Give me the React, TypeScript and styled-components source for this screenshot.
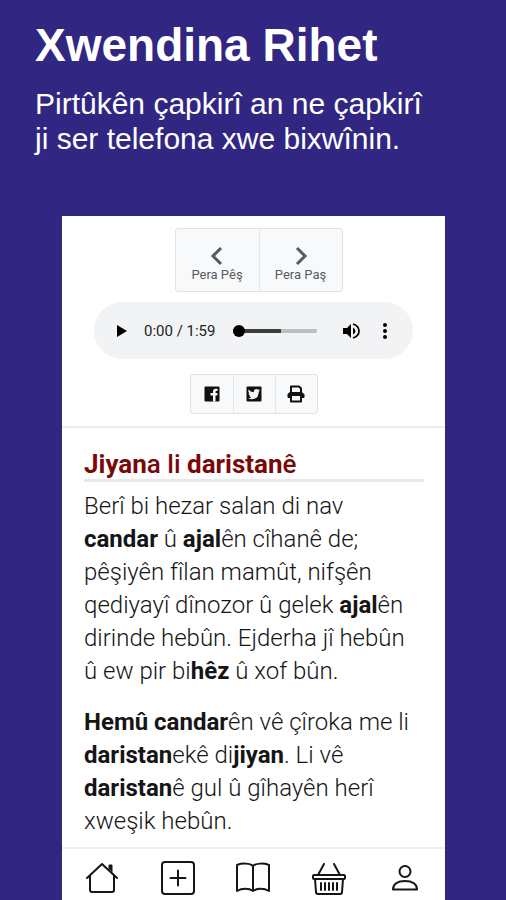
import React from "react";
import styled, { createGlobalStyle } from "styled-components";

const GlobalStyle = createGlobalStyle`
  *, *::before, *::after { box-sizing: border-box; }
  body { margin: 0; background: #312783; }
  h1, h2, p { margin: 0; }
  button { font: inherit; color: inherit; cursor: pointer; }
`;

const Page = styled.div`
  display: flex;
  flex-direction: column;
  min-height: 100vh;
  background: #312783;
`;

const Hero = styled.header`
  height: 216px;
  padding: 18px 35px 0;
  color: #fff;
  font-family: "Liberation Sans", Arial, sans-serif;
`;

const HeroTitle = styled.h1`
  font-size: 46px;
  line-height: 54px;
  font-weight: 700;
`;

const HeroText = styled.p`
  margin-top: 14px;
  font-size: 30px;
  line-height: 35px;
`;

const Screen = styled.main`
  flex: 1;
  display: flex;
  flex-direction: column;
  margin: 0 61px 0 62px;
  background: #fff;
  color: #151515;
  font-family: Roboto, sans-serif;
`;

const Controls = styled.section`
  display: flex;
  flex-direction: column;
  align-items: center;
  padding: 12px 32px;
  border-bottom: 2px solid #ededee;
`;

const ButtonGroup = styled.div`
  display: flex;
  border: 1px solid #dfe1e3;
  border-radius: 3px;
  background: #f8f9fa;

  > button + button {
    border-left: 1px solid #e4e6e8;
  }
`;

const PagerGroup = styled(ButtonGroup)`
  margin-left: 10px;
`;

const PageButton = styled.button`
  display: flex;
  flex-direction: column;
  align-items: center;
  gap: 1px;
  width: 83px;
  height: 62px;
  padding: 17px 0 0;
  border: 0;
  background: none;
  color: #555b61;
  font-size: 13px;
  line-height: 16px;
`;

const ShareButton = styled.button`
  display: grid;
  place-items: center;
  width: 42px;
  height: 38px;
  padding: 0;
  border: 0;
  background: none;
  color: #111;
`;

const Player = styled.div`
  display: flex;
  align-items: center;
  align-self: stretch;
  height: 57px;
  margin: 10px 0 15px;
  padding: 0 16px;
  border-radius: 29px;
  background: #f1f3f4;
`;

const PlayerButton = styled.button`
  display: grid;
  place-items: center;
  width: 24px;
  height: 32px;
  padding: 0;
  border: 0;
  background: none;
  color: #000;
`;

const Time = styled.span`
  margin: 0 18px 0 10px;
  color: #222;
  font-size: 15px;
  line-height: 24px;
  white-space: nowrap;
`;

const Seek = styled.input`
  flex: 1;
  min-width: 0;
  height: 12px;
  margin: 0 22px 0 0;
  appearance: none;
  background: linear-gradient(to right, #3b3c3c 57%, #bcbebf 57%) center / 100% 4px no-repeat;

  &::-webkit-slider-thumb {
    appearance: none;
    width: 12px;
    height: 12px;
    border-radius: 50%;
    background: #000;
  }
`;

const MoreButton = styled(PlayerButton)`
  margin-left: 10px;
`;

const Article = styled.article`
  flex: 1;
  padding: 21px 21px 8px 22px;
  font-size: 24px;
  line-height: 33px;
  font-weight: 300;

  b { font-weight: 700; }
`;

const Title = styled.h2`
  margin-bottom: 8px;
  border-bottom: 3px solid #e9e9e9;
  color: #7a0808;
  font-size: 26px;
  line-height: 30px;
  font-weight: 500;
`;

const Paragraph = styled.p`
  padding-right: 8px;

  & + & { margin-top: 18px; }
`;

const TabBar = styled.nav`
  display: grid;
  grid-template-columns: repeat(5, 1fr);
  height: 53px;
  padding: 0 2px;
  border-top: 2px solid #efeff0;
`;

const Tab = styled.a`
  display: grid;
  place-items: center;
  padding-top: 6px;
  color: #161616;
`;

const Icon = styled.svg`
  display: block;
  fill: none;
  stroke: currentColor;
  stroke-linejoin: round;
  stroke-linecap: round;
  stroke-width: 2;
`;

const tabs = [
  {
    label: "Mal",
    drawing: (
      <>
        <path d="M2 17 17 3 32 17" />
        <path d="M5 15V29Q5 31 7 31H27Q29 31 29 29V15" />
        <path d="M24 8V4H27V11" fill="currentColor" strokeWidth="1" />
      </>
    ),
  },
  {
    label: "Zêde bike",
    drawing: (
      <>
        <rect x="1" y="1" width="32" height="32" rx="3" />
        <path d="M17 9.500V24.500M9.500 17H24.500" />
      </>
    ),
  },
  {
    label: "Pirtûk",
    drawing: (
      <path d="M17 5C14 2 6 2 1 4V30C6 27 13 27 17 30C21 27 28 27 33 30V4C28 2 20 2 17 5V30" />
    ),
  },
  {
    label: "Selik",
    drawing: (
      <>
        <path d="M6 14 12 3M28 14 22 3" />
        <rect x="1" y="14" width="32" height="4" rx="1" />
        <path d="M3 18 4 31Q4 33 6 33H28Q30 33 30 31L31 18" />
        <path d="M9 22V29M13 22V29M17 22V29M21 22V29M25 22V29" />
      </>
    ),
  },
  {
    label: "Profîl",
    drawing: (
      <>
        <circle cx="17" cy="10.500" r="5.500" />
        <path d="M5 28.500C5 23 10 20 17 20S29 23 29 28.500Z" />
      </>
    ),
  },
];

export default function App() {
  return (
    <Page>
      <GlobalStyle />
      <Hero>
        <HeroTitle>Xwendina Rihet</HeroTitle>
        <HeroText>
          Pirtûkên çapkirî an ne çapkirî
          <br />
          ji ser telefona xwe bixwînin.
        </HeroText>
      </Hero>

      <Screen>
        <Controls>
          <PagerGroup>
            <PageButton type="button">
              <Icon width="20" height="20" viewBox="0 0 20 20">
                <path d="M14 2 6 10 14 18" strokeWidth="3" strokeLinejoin="miter" strokeLinecap="butt" />
              </Icon>
              Pera Pêş
            </PageButton>
            <PageButton type="button">
              <Icon width="20" height="20" viewBox="0 0 20 20">
                <path d="M6 2 14 10 6 18" strokeWidth="3" strokeLinejoin="miter" strokeLinecap="butt" />
              </Icon>
              Pera Paş
            </PageButton>
          </PagerGroup>

          <Player>
            <PlayerButton type="button" aria-label="Lêxe">
              <svg width="10" height="12" viewBox="0 0 10 12">
                <path d="M0 0 10 6 0 12Z" fill="currentColor" />
              </svg>
            </PlayerButton>
            <Time>0:00 / 1:59</Time>
            <Seek type="range" min="0" max="119" defaultValue="0" aria-label="Dem" />
            <PlayerButton type="button" aria-label="Deng">
              <svg width="18" height="18" viewBox="0 0 18 18">
                <path d="M1 6H5L9 2V16L5 12H1Z" fill="currentColor" />
                <path d="M11 5.500Q13.500 7 13.500 9T11 12.500Z" fill="currentColor" />
                <path d="M11 2Q17 4 17 9T11 16" fill="none" stroke="currentColor" strokeWidth="1.700" />
              </svg>
            </PlayerButton>
            <MoreButton type="button" aria-label="Zêdetir">
              <svg width="4" height="16" viewBox="0 0 4 16" fill="currentColor">
                <circle cx="2" cy="2" r="2" />
                <circle cx="2" cy="8" r="2" />
                <circle cx="2" cy="14" r="2" />
              </svg>
            </MoreButton>
          </Player>

          <ButtonGroup>
            <ShareButton type="button" aria-label="Facebook">
              <svg width="16" height="16" viewBox="0 0 16 16">
                <rect x="0.500" y="0.500" width="15" height="15" rx="1" fill="currentColor" />
                <path d="M9 15.500V9.500H6.500V7H9V5.500Q9 2.800 11.800 2.800H13.500V5H12.500Q11.500 5 11.500 6V7H13.500L13.200 9.500H11.500V15.500Z" fill="#f8f9fa" />
              </svg>
            </ShareButton>
            <ShareButton type="button" aria-label="Twitter">
              <svg width="16" height="16" viewBox="0 0 16 16">
                <rect x="0.500" y="0.500" width="15" height="15" rx="1" fill="currentColor" />
                <path d="M2.500 3.500Q4.500 6 7.800 6.200Q7.600 3.200 10.200 3Q11.300 3 12 3.700L13.600 3.200L12.900 4.500L14 4.300L12.800 5.700Q12.700 13 6 13.200Q3.800 13.200 2.200 12.200Q4.200 12.200 5.300 11.200Q3.700 11 3.200 9.500H4.200Q2.500 8.800 2.500 6.900L3.400 7.200Q1.900 5.700 2.500 3.500Z" fill="#f8f9fa" />
              </svg>
            </ShareButton>
            <ShareButton type="button" aria-label="Çap bike">
              <Icon width="18" height="18" viewBox="0 0 18 18">
                <path d="M4 8V1.500H12L14 3.500V8" />
                <path d="M3 7.500H15L17 9.500V12.500H14.500V10.500H3.500V12.500H1V9.500Z" fill="currentColor" strokeWidth="1" />
                <path d="M4 11V16.500H14V11" />
              </Icon>
            </ShareButton>
          </ButtonGroup>
        </Controls>

        <Article>
          <Title>
            <b>Jiyan</b>a li <b>daristan</b>ê
          </Title>
          <Paragraph>
            Berî bi hezar salan di nav <b>candar</b> û <b>ajal</b>ên cîhanê de; pêşiyên
            fîlan mamût, nifşên qediyayî dînozor û gelek <b>ajal</b>ên dirinde hebûn.
            Ejderha jî hebûn û ew pir bi<b>hêz</b> û xof bûn.
          </Paragraph>
          <Paragraph>
            <b>Hemû candar</b>ên vê çîroka me li <b>daristan</b>ekê di<b>jiyan</b>. Li vê{" "}
            <b>daristan</b>ê gul û gîhayên herî xweşik hebûn.
          </Paragraph>
        </Article>

        <TabBar>
          {tabs.map((tab) => (
            <Tab key={tab.label} href="#" aria-label={tab.label}>
              <Icon width="34" height="34" viewBox="0 0 34 34">
                {tab.drawing}
              </Icon>
            </Tab>
          ))}
        </TabBar>
      </Screen>
    </Page>
  );
}
